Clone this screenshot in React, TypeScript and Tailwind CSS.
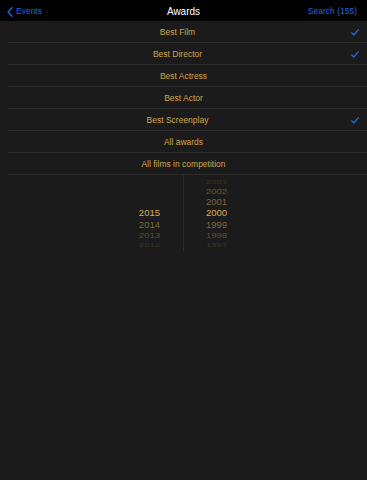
import { useState } from "react";

const awards = [
  { label: "Best Film", checked: true },
  { label: "Best Director", checked: true },
  { label: "Best Actress", checked: false },
  { label: "Best Actor", checked: false },
  { label: "Best Screenplay", checked: true },
  { label: "All awards", checked: false },
  { label: "All films in competition", checked: false },
];

function Check() {
  return (
    <svg width="8" height="7" viewBox="0 0 8 7" fill="none" className="text-[#1a6be0]">
      <path d="M0.8 4 L2.8 6 L7.2 0.8" stroke="currentColor" strokeWidth="1.3" strokeLinecap="round" strokeLinejoin="round" />
    </svg>
  );
}

// wheel rows: height, color, vertical squish
const rightWheel = [
  { y: "2003", h: "h-[11px]", c: "text-[#3b3222]", s: "scale-y-[0.55]" },
  { y: "2002", h: "h-[10px]", c: "text-[#6a5834]", s: "scale-y-[0.8]" },
  { y: "2001", h: "h-[10px]", c: "text-[#7a6539]", s: "scale-y-[0.95]" },
  { y: "2000", h: "h-[12px]", c: "text-[#dcae52]", s: "" },
  { y: "1999", h: "h-[12px]", c: "text-[#7a6539]", s: "scale-y-[0.95]" },
  { y: "1998", h: "h-[10px]", c: "text-[#5f4f2e]", s: "scale-y-[0.8]" },
  { y: "1997", h: "h-[7px]", c: "text-[#3b3222]", s: "scale-y-[0.55]" },
];

const leftWheel = [
  { y: "2015", h: "h-[12px]", c: "text-[#dcae52]", s: "" },
  { y: "2014", h: "h-[12px]", c: "text-[#7a6539]", s: "scale-y-[0.95]" },
  { y: "2013", h: "h-[10px]", c: "text-[#5f4f2e]", s: "scale-y-[0.8]" },
  { y: "2012", h: "h-[7px]", c: "text-[#3b3222]", s: "scale-y-[0.55]" },
];

export default function App() {
  const [items] = useState(awards);

  return (
    <div className="w-[367px] h-[480px] bg-[#1b1b1b] overflow-hidden font-['Liberation_Sans',Arial,sans-serif]">
      {/* Nav bar */}
      <div className="h-[21px] bg-black flex items-center justify-between px-[7px] pt-[2px]">
        <div className="flex items-center gap-[3px] text-[#1a6be0] text-[8.5px] w-[80px]">
          <svg width="6" height="10" viewBox="0 0 6 10" fill="none">
            <path d="M5 0.8 L1 5 L5 9.2" stroke="currentColor" strokeWidth="1.4" strokeLinecap="round" strokeLinejoin="round" />
          </svg>
          <span>Events</span>
        </div>
        <div className="text-white text-[10px]">Awards</div>
        <div className="text-[#1a6be0] text-[8.5px] w-[80px] text-right pr-[3px]">Search (155)</div>
      </div>

      {/* Award list */}
      <div className="flex flex-col">
        {items.map((a) => (
          <div
            key={a.label}
            className={`h-[22px] ml-[8px] pt-[2px] border-b border-[#2b2b2b] relative flex items-center justify-center ${a.checked ? "pr-[12px]" : ""}`}
          >
            <span className="text-[#cfa44c] text-[8.5px] -ml-[8px]">{a.label}</span>
            {a.checked && (
              <div className="absolute right-[8px] top-[8px]">
                <Check />
              </div>
            )}
          </div>
        ))}
      </div>

      {/* Year picker */}
      <div className="flex h-[76px] text-[9.5px] leading-none">
        <div className="w-[183px] flex flex-col items-end pr-[23px] pt-[32px]">
          {leftWheel.map((r) => (
            <div key={r.y} className={`${r.h} flex items-center ${r.c}`}>
              <span className={`block ${r.s}`}>{r.y}</span>
            </div>
          ))}
        </div>
        <div className="w-px bg-[#2b2b2b]" />
        <div className="flex-1 flex flex-col items-start pl-[22px] pt-[1px]">
          {rightWheel.map((r) => (
            <div key={r.y} className={`${r.h} flex items-center ${r.c}`}>
              <span className={`block ${r.s}`}>{r.y}</span>
            </div>
          ))}
        </div>
      </div>
    </div>
  );
}
